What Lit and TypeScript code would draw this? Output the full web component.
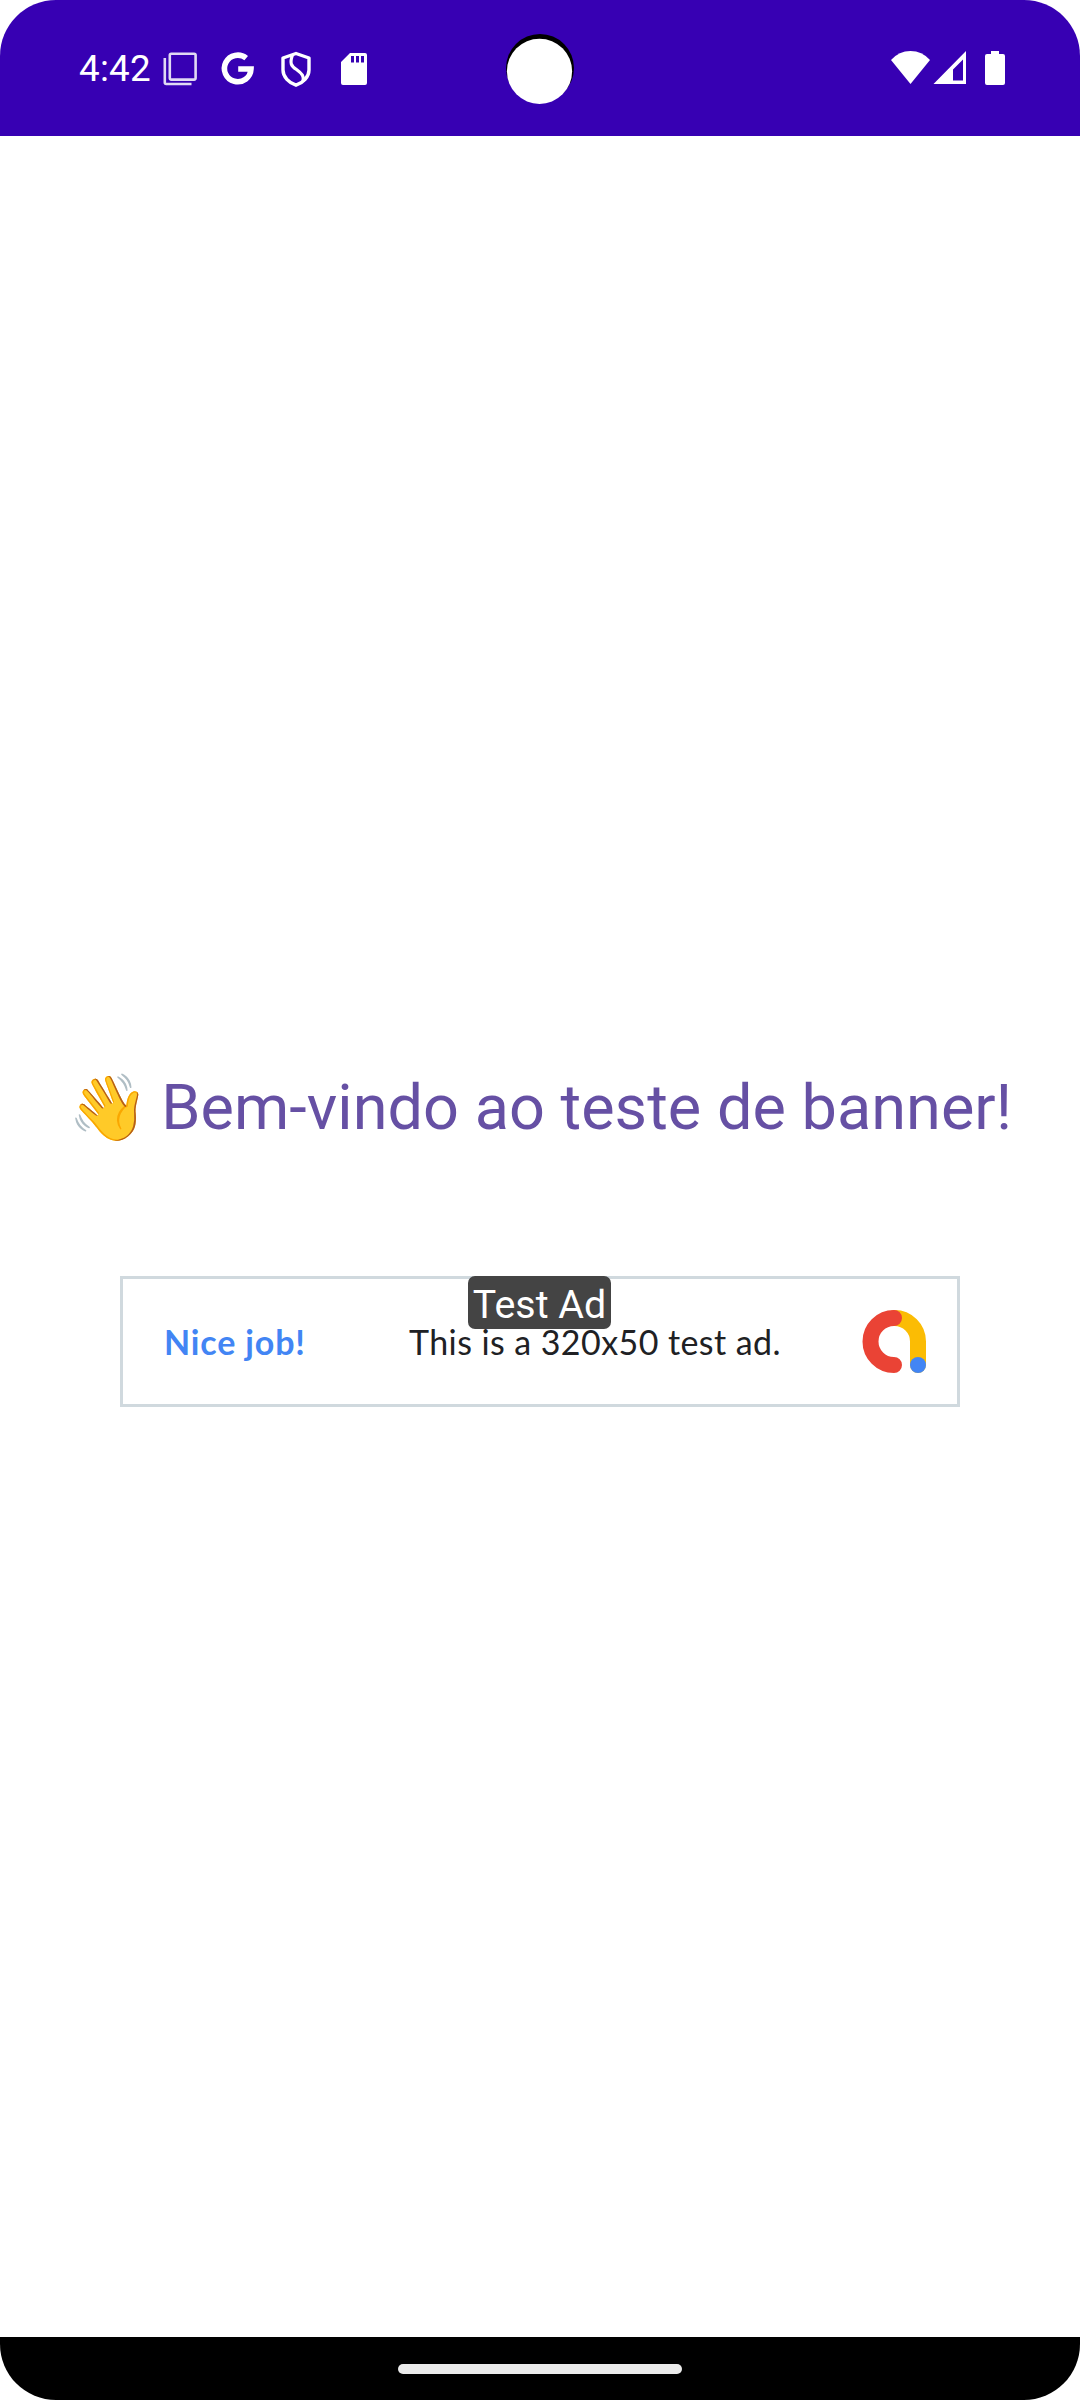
import { LitElement, html, css } from "lit";
import { customElement } from "lit/decorators.js";

@customElement("status-bar")
class StatusBar extends LitElement {
  static styles = css`
    :host { display: flex; align-items: flex-start; box-sizing: border-box; height: 136px; padding: 0 72px 0 79px; background: #3700b3; position: relative; color: #fff; }
    .time { font: 400 36.75px/43px Roboto, sans-serif; letter-spacing: 0.25px; margin-top: 47px; width: 84px; white-space: nowrap; }
    svg { display: block; }
    .notifications { margin-top: 50px; }
    .system { margin: 50px 0 0 auto; }
    .camera { position: absolute; left: 506px; top: 34px; }
  `;
  render() {
    return html`
      <span class="time">4:42</span>
      <svg class="notifications" width="210" height="38" viewBox="163 50 210 38" fill="none">
        <g stroke="#fff" stroke-opacity=".85" stroke-width="2.6">
          <rect x="169.800" y="53.800" width="25.800" height="25.800" rx="1.5"/>
          <path d="M164.800 58v24.500q0 1.500 1.500 1.500H191.500"/>
        </g>
        <path d="M246.200 58.200A13.300 13.300 0 1 0 251 69H238.200" stroke="#fff" stroke-width="5.600"/>
        <path d="M296 53.500 309 58v12c0 7-6 13-13 15.200-7-2.200-13-8.200-13-15.200V58Z" stroke="#fff" stroke-width="3.400" stroke-linejoin="round"/>
        <path d="M292.500 55c-3 8-1.500 11 4 14.500 5.500 4 8 7 6.500 12" stroke="#fff" stroke-width="3.200"/>
        <path fill="#fff" fill-rule="evenodd" d="M350 53h15q2 0 2 2v28q0 2-2 2h-22q-2 0-2-2V62Zm1 3v6.500h3V56Zm5 0v6.500h3V56Zm5 0v6.500h3V56Z"/>
      </svg>
      <svg class="camera" width="68" height="70" viewBox="506 34 68 70">
        <circle cx="540" cy="68" r="34"/>
        <circle cx="539.500" cy="71.300" r="32.600" fill="#fff"/>
      </svg>
      <svg class="system" width="118" height="38" viewBox="890 50 118 38" fill="#fff">
        <path d="M891 60Q899 51 910.500 51T930 60L910.500 84Z"/>
        <path fill-rule="evenodd" d="M933.500 84 966 51V84ZM953 69.500V80.500H963V59.500Z"/>
        <path d="M991 51h8v3h4q2 0 2 2v27q0 2-2 2h-16q-2 0-2-2V56q0-2 2-2h4Z"/>
      </svg>
    `;
  }
}

@customElement("ad-banner")
class AdBanner extends LitElement {
  static styles = css`
    :host { display: flex; align-items: flex-start; box-sizing: border-box; width: 840px; height: 131px; border: 3px solid #d0d9de; padding: 0 0 0 41px; position: relative; }
    .praise, .message { font: 400 34px/40px Lato, sans-serif; white-space: nowrap; margin-top: 43px; }
    .praise { color: #4285f4; width: 245px; font-weight: 700; letter-spacing: 0.85px; }
    .message { color: #202124; width: 452px; letter-spacing: 0.42px; }
    .logo { display: block; margin-top: 29px; }
    .badge { position: absolute; left: 345px; top: -3px; width: 143px; height: 53px; border-radius: 7px; background: #444; color: #fff; font: 400 39.375px/57px Roboto, sans-serif; text-align: center; white-space: nowrap; }
  `;
  render() {
    return html`
      <span class="praise">Nice job!</span>
      <span class="message">This is a 320x50 test ad.</span>
      <svg class="logo" width="66" height="66" viewBox="861 1308 66 66" fill="none" stroke-width="16" stroke-linecap="round">
        <path d="M894.500 1318a23.500 23.500 0 0 1 23.500 23.500v23.500" stroke="#fbbc04"/>
        <path d="M894 1318a23.500 23.500 0 0 0 0 47" stroke="#ea4335"/>
        <circle cx="918" cy="1365" r="8" fill="#4285f4"/>
      </svg>
      <span class="badge">Test Ad</span>
    `;
  }
}

@customElement("app-root")
class AppRoot extends LitElement {
  static styles = css`
    :host { display: block; background: #fff; }
    .screen { display: flex; flex-direction: column; height: 2400px; width: 1080px; border-radius: 56px; overflow: hidden; background: #fff; }
    .content { flex: 1; display: flex; flex-direction: column; align-items: center; }
    .title { display: flex; margin: 935px 0 0; width: 944px; height: 74px; font: 400 63px/74px Roboto, sans-serif; letter-spacing: 0.03px; color: #6650a4; white-space: nowrap; }
    .wave { width: 94px; font-size: 65px; }
    .ad { margin-top: 131px; }
    .nav { height: 63px; background: #000; display: flex; justify-content: center; }
    .handle { margin-top: 27px; width: 284px; height: 10px; border-radius: 5px; background: #ebebeb; }
  `;
  render() {
    return html`
      <main class="screen">
        <status-bar></status-bar>
        <div class="content">
          <h1 class="title"><span class="wave">👋</span><span>Bem-vindo ao teste de banner!</span></h1>
          <ad-banner class="ad"></ad-banner>
        </div>
        <div class="nav"><div class="handle"></div></div>
      </main>
    `;
  }
}
